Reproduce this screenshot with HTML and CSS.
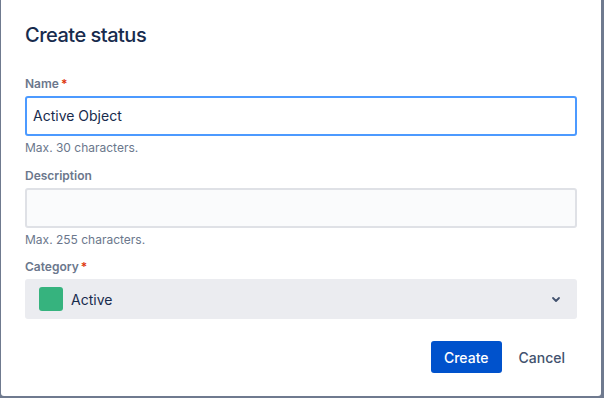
FILE: index.html
```html
<!DOCTYPE html>
<html>
<head>
    <link rel="stylesheet" href="styles.css">
</head>
<body>
    <div class="modal">
        <h1 class="modal-title">Create status</h1>

        <div class="field">
            <label class="field-label">Name<span class="required">*</span></label>
            <div class="textfield focused">Active Object</div>
            <div class="helper">Max. 30 characters.</div>
        </div>

        <div class="field">
            <label class="field-label">Description</label>
            <div class="textfield"></div>
            <div class="helper">Max. 255 characters.</div>
        </div>

        <div class="field field-last">
            <label class="field-label">Category<span class="required">*</span></label>
            <div class="select">
                <span class="swatch"></span>
                <span class="select-value">Active</span>
                <svg class="chevron" width="10" height="7" viewBox="0 0 10 7">
                    <path d="M2 2 L5 5 L8 2" fill="none" stroke="#42526e" stroke-width="1.8" stroke-linecap="round" stroke-linejoin="round"/>
                </svg>
            </div>
        </div>

        <div class="footer">
            <button class="btn btn-primary">Create</button>
            <button class="btn btn-subtle">Cancel</button>
        </div>
    </div>
</body>
</html>
```

FILE: styles.css
```css
body {
    margin: 0;
    background-color: #6f7a8f;
    font-family: Inter, "Noto Sans", sans-serif;
    color: #172b4d;
    height: 398px;
    overflow: hidden;
}

.modal {
    box-sizing: border-box;
    width: 600px;
    height: 396px;
    margin-left: 1px;
    padding: 23px 24px 0 24px;
    background-color: #ffffff;
    border-radius: 0 0 3px 3px;
}

.modal-title {
    margin: 0 0 29px 0;
    font-size: 20px;
    line-height: 24px;
    font-weight: 500;
    letter-spacing: -0.5px;
    color: #172b4d;
}

.field {
    margin-bottom: 12px;
}

.field-last {
    margin-top: -1px;
}

.field-label {
    display: block;
    font-size: 12px;
    line-height: 16px;
    font-weight: 600;
    color: #6b778c;
    margin-bottom: 4px;
}

.required {
    color: #de350b;
    margin-left: 2px;
}

.textfield {
    box-sizing: border-box;
    height: 40px;
    padding: 0 6px;
    border: 2px solid #dfe1e6;
    border-radius: 3px;
    background-color: #fafbfc;
    font-size: 14px;
    line-height: 36px;
    color: #172b4d;
}

.textfield.focused {
    border-color: #4c9aff;
    background-color: #ffffff;
}

.helper {
    margin-top: 4px;
    font-size: 12px;
    line-height: 16px;
    color: #6b778c;
}

.select {
    box-sizing: border-box;
    height: 40px;
    display: flex;
    align-items: center;
    padding: 0 14px 0 14px;
    border-radius: 3px;
    background-color: #ebecf0;
}

.swatch {
    width: 24px;
    height: 24px;
    border-radius: 3px;
    background-color: #36b37e;
    margin-right: 8px;
}

.select-value {
    flex: 1;
    font-size: 14px;
    color: #172b4d;
}

.chevron {
    margin-right: 2px;
}

.footer {
    display: flex;
    justify-content: flex-end;
    gap: 5px;
    margin-top: 22px;
}

.btn {
    font-family: Inter, "Noto Sans", sans-serif;
    font-size: 14px;
    font-weight: 500;
    height: 32px;
    padding: 0 12px;
    border: none;
    border-radius: 3px;
    background: none;
}

.btn-primary {
    background-color: #0052cc;
    color: #ffffff;
    padding: 0 13px;
}

.btn-subtle {
    color: #42526e;
}
```
